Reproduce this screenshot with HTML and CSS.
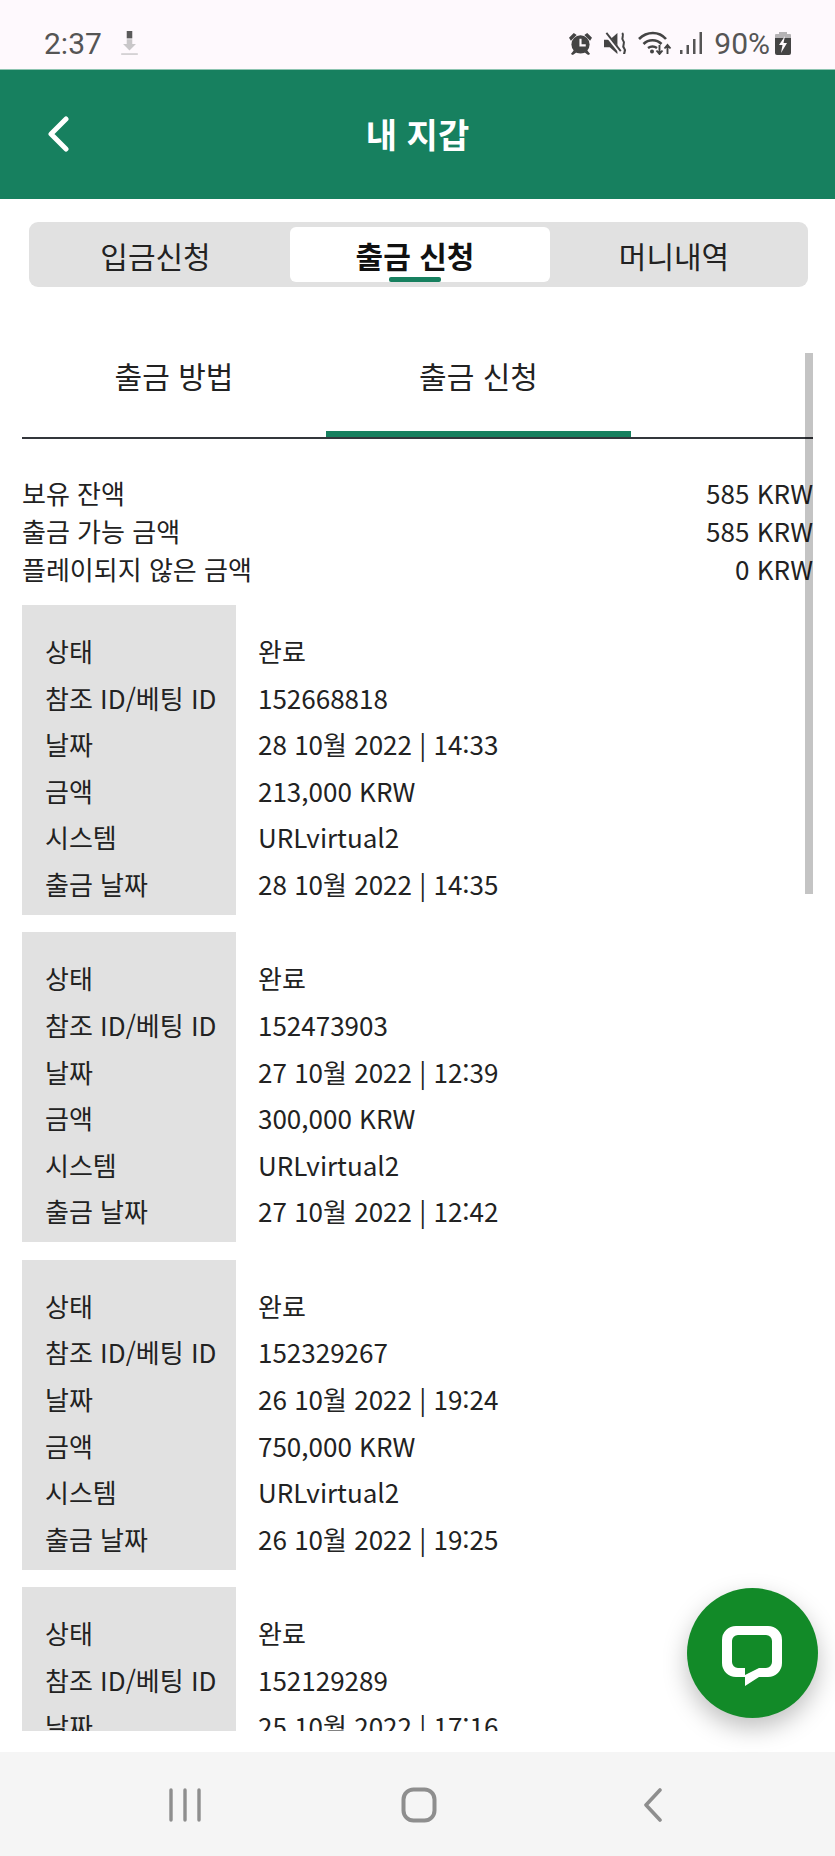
FILE: index.html
```html
<!DOCTYPE html>
<html lang="ko">
<head>
    <meta charset="UTF-8">
    <meta name="viewport" content="width=device-width, initial-scale=1.0">
    <title>내 지갑</title>
    <link rel="stylesheet" href="styles.css">
</head>
<body>
<div class="screen">
    <div class="status-bar">
        <div class="status-left">
            <span class="time">2:37</span>
            <svg class="ic-download" viewBox="0 0 20 26"><rect x="7" y="0" width="6" height="8" fill="#5a5a5a"/><path d="M7 9h6v5h4l-7 7-7-7h4z" fill="#c9c7c9"/><rect x="1" y="24" width="18" height="2" fill="#d4d2d4"/></svg>
        </div>
        <div class="status-right">
            <svg class="ic-alarm" viewBox="0 0 24 24"><circle cx="12" cy="13" r="9.500" fill="#444"/><path d="M0 6l5-5 3 2-6 6zM24 6l-5-5-3 2 6 6zM5 19l-3 4 2 1 4-3zM19 19l3 4-2 1-4-3z" fill="#444"/><path d="M12 7v7h5.500" fill="none" stroke="#fef9fd" stroke-width="2.200"/></svg>
            <svg class="ic-mute" viewBox="0 0 24 24"><path d="M0 8h6l8-7v22l-8-7H0z" fill="#444"/><path d="M1 1l16 20" stroke="#fef9fd" stroke-width="3.500"/><path d="M2.500 1l15 19" stroke="#444" stroke-width="2"/><path d="M19 1c3 3-2 5 1 8s-2 5 1 8c2 2 0 4 0 6" fill="none" stroke="#444" stroke-width="2.200"/></svg>
            <svg class="ic-wifi" viewBox="0 0 34 24"><g fill="none" stroke="#444" stroke-width="2.600"><path d="M1 8c8-8 20-8 27 0"/><path d="M5.500 13c5-5 13-5 18 0"/><path d="M10 17c3-2 6-2 9 0"/></g><circle cx="14" cy="20.500" r="2" fill="#444"/><path d="M21.500 14v9M18.500 19.500l3 3.500 3-3.500M29.500 23v-9M26.500 17.500l3-3.500 3 3.500" fill="none" stroke="#444" stroke-width="1.900"/></svg>
            <svg class="ic-signal" viewBox="0 0 22 22"><g fill="#555"><rect x="0" y="18" width="2.500" height="4"/><rect x="6.500" y="13" width="2.500" height="9"/><rect x="13" y="7" width="2.500" height="15"/><rect x="19.500" y="0" width="2.500" height="22"/></g></svg>
            <span class="battery-pct">90%</span>
            <svg class="ic-battery" viewBox="0 0 16 23"><rect x="4" y="0" width="8" height="3" fill="#b5b3b5"/><rect x="0" y="2" width="16" height="5" rx="1" fill="#b5b3b5"/><path d="M0 6h16v15a2 2 0 0 1-2 2H2a2 2 0 0 1-2-2z" fill="#444"/><path d="M10 4L4 13h3.500L6 21l6-10H8.500z" fill="#fef9fd"/></svg>
        </div>
    </div>

    <div class="app-header">
        <svg class="back" viewBox="0 0 24 36"><path d="M20 3L5 18l15 15" fill="none" stroke="#fff" stroke-width="5" stroke-linecap="round" stroke-linejoin="round"/></svg>
        <h1 class="title">내 지갑</h1>
    </div>

    <div class="segment">
        <div class="seg-item seg-first">입금신청</div>
        <div class="seg-item seg-active">출금 신청<span class="seg-mark"></span></div>
        <div class="seg-item seg-last">머니내역</div>
    </div>

    <div class="content">
        <div class="scrollbar"></div>
        <div class="subtabs">
            <div class="subtab">출금 방법</div>
            <div class="subtab subtab-on">출금 신청</div>
        </div>

        <div class="summary">
            <div class="sum-row"><span>보유 잔액</span><span>585 KRW</span></div>
            <div class="sum-row"><span>출금 가능 금액</span><span>585 KRW</span></div>
            <div class="sum-row"><span>플레이되지 않은 금액</span><span>0 KRW</span></div>
        </div>

        <div class="card">
            <div class="labels">
                <div>상태</div><div>참조 ID/베팅 ID</div><div>날짜</div><div>금액</div><div>시스템</div><div>출금 날짜</div>
            </div>
            <div class="values">
                <div>완료</div><div>152668818</div><div>28 10월 2022 | 14:33</div><div>213,000 KRW</div><div>URLvirtual2</div><div>28 10월 2022 | 14:35</div>
            </div>
        </div>
        <div class="card">
            <div class="labels">
                <div>상태</div><div>참조 ID/베팅 ID</div><div>날짜</div><div>금액</div><div>시스템</div><div>출금 날짜</div>
            </div>
            <div class="values">
                <div>완료</div><div>152473903</div><div>27 10월 2022 | 12:39</div><div>300,000 KRW</div><div>URLvirtual2</div><div>27 10월 2022 | 12:42</div>
            </div>
        </div>
        <div class="card">
            <div class="labels">
                <div>상태</div><div>참조 ID/베팅 ID</div><div>날짜</div><div>금액</div><div>시스템</div><div>출금 날짜</div>
            </div>
            <div class="values">
                <div>완료</div><div>152329267</div><div>26 10월 2022 | 19:24</div><div>750,000 KRW</div><div>URLvirtual2</div><div>26 10월 2022 | 19:25</div>
            </div>
        </div>
        <div class="card">
            <div class="labels">
                <div>상태</div><div>참조 ID/베팅 ID</div><div>날짜</div>
            </div>
            <div class="values">
                <div>완료</div><div>152129289</div><div>25 10월 2022 | 17:16</div>
            </div>
        </div>
    </div>

    <div class="nav-bar">
        <svg class="nav-recent" viewBox="0 0 34 34"><g fill="none" stroke="#8e8e8e" stroke-width="3.400" stroke-linecap="round"><path d="M3 2v30M17 2v30M31 2v30"/></g></svg>
        <svg class="nav-home" viewBox="0 0 36 36"><rect x="2.500" y="2.500" width="31" height="31" rx="10" fill="none" stroke="#8e8e8e" stroke-width="4"/></svg>
        <svg class="nav-back" viewBox="0 0 20 34"><path d="M17 2L3 17l14 15" fill="none" stroke="#8e8e8e" stroke-width="3.600" stroke-linecap="round" stroke-linejoin="round"/></svg>
    </div>

    <div class="fab">
        <svg viewBox="0 0 60 60"><path fill-rule="evenodd" fill="#fff" d="M14 0h32a14 14 0 0 1 14 14v23a14 14 0 0 1-14 14h-9L23 60V51h-9A14 14 0 0 1 0 37V14A14 14 0 0 1 14 0zM16 9a6 6 0 0 0-6 6v21a6 6 0 0 0 6 6h7v7l14-7h7a6 6 0 0 0 6-6V15a6 6 0 0 0-6-6z"/></svg>
    </div>
</div>
</body>
</html>
```

FILE: styles.css
```css
* {
    box-sizing: border-box;
}
html, body {
    margin: 0;
    padding: 0;
}
body {
    font-family: "Noto Sans CJK KR", "Noto Sans", sans-serif;
    background: white;
    color: #111;
}
.screen {
    position: relative;
    width: 835px;
    height: 1856px;
    overflow: hidden;
    display: flex;
    flex-direction: column;
    background: #fff;
}

/* status bar */
.status-bar {
    height: 69px;
    flex: none;
    background: #fef9fd;
    display: flex;
    justify-content: space-between;
    align-items: center;
    padding: 17px 44px 0 44px;
    color: #555;
    font-family: Roboto, sans-serif;
}
.status-left, .status-right {
    display: flex;
    align-items: center;
}
.time {
    font-size: 30px;
}
.ic-download {
    width: 19px;
    height: 24px;
    margin-left: 18px;
}
.ic-alarm { width: 23px; height: 23px; }
.ic-mute { width: 23px; height: 23px; margin-left: 12px; }
.ic-wifi { width: 34px; height: 24px; margin-left: 11px; }
.ic-signal { width: 22px; height: 22px; margin-left: 8px; }
.battery-pct {
    font-size: 30px;
    margin-left: 12px;
}
.ic-battery { width: 16px; height: 23px; margin-left: 5px; }

/* green header */
.app-header {
    position: relative;
    height: 130px;
    flex: none;
    background: #17805f;
    display: flex;
    align-items: center;
    justify-content: center;
    border-top: 1px solid #8cc4b0;
}
.back {
    position: absolute;
    left: 46px;
    top: 46px;
    width: 24px;
    height: 36px;
}
.title {
    margin: 0 0 2px;
    color: #fff;
    font-size: 34px;
    font-weight: 700;
    line-height: 48px;
}

/* segmented control */
.segment {
    flex: none;
    width: 779px;
    height: 65px;
    margin: 23px 0 0 29px;
    padding: 5px;
    background: #e1e1e1;
    border-radius: 9px;
    display: grid;
    grid-template-columns: 256px 260px 1fr;
    font-size: 30px;
}
.seg-item {
    position: relative;
    display: flex;
    align-items: center;
    justify-content: center;
    color: #222;
}
.seg-first { padding-right: 13px; }
.seg-last { padding-right: 5px; }
.seg-active {
    background: #fff;
    border-radius: 6px;
    font-weight: 700;
    color: #111;
    padding-right: 10px;
}
.seg-mark {
    position: absolute;
    left: 99px;
    bottom: 0;
    width: 52px;
    height: 5px;
    border-radius: 2px;
    background: #17805f;
}

/* scrolling part */
.content {
    position: relative;
    flex: 1;
    min-height: 0;
    overflow: hidden;
    margin-top: 66px;
    margin-bottom: 21px;
    padding: 0 22px 0 22px;
}
.scrollbar {
    position: absolute;
    top: 0;
    right: 22px;
    width: 8px;
    height: 541px;
    background: rgba(0, 0, 0, 0.23);
}
.subtabs {
    display: grid;
    grid-template-columns: 304px 305px;
    height: 86px;
    border-bottom: 2px solid #33363b;
}
.subtab {
    height: 84px;
    text-align: center;
    font-size: 30px;
    line-height: 45px;
    color: #222;
}
.subtab-on {
    border-bottom: 6px solid #17805f;
}
.summary {
    margin-top: 35px;
    margin-bottom: 17px;
}
.sum-row {
    display: flex;
    justify-content: space-between;
    font-size: 26px;
    line-height: 38px;
    color: #222;
}
.card {
    display: flex;
    height: 310px;
    margin-bottom: 17.400px;
    font-size: 26px;
    line-height: 46.600px;
    color: #222;
}
.labels {
    width: 214px;
    flex: none;
    background: #e1e1e1;
    padding: 23px 0 0 23px;
    white-space: nowrap;
}
.values {
    padding: 23px 0 0 22px;
    white-space: nowrap;
}

/* android nav */
.nav-bar {
    height: 104px;
    flex: none;
    background: #f5f5f5;
    display: flex;
    align-items: center;
    padding: 2px 0 0;
}
.nav-recent { width: 34px; height: 34px; margin-left: 168px; }
.nav-home { width: 36px; height: 36px; margin-left: 199px; }
.nav-back { width: 20px; height: 34px; margin-left: 206px; }

/* chat button */
.fab {
    position: absolute;
    left: 687px;
    top: 1588px;
    width: 131px;
    height: 130px;
    border-radius: 50%;
    background: #128a28;
    box-shadow: 0 10px 24px rgba(0, 0, 0, 0.25);
    padding: 38px 0 0 35px;
}
.fab svg {
    display: block;
    width: 60px;
    height: 60px;
}
```
